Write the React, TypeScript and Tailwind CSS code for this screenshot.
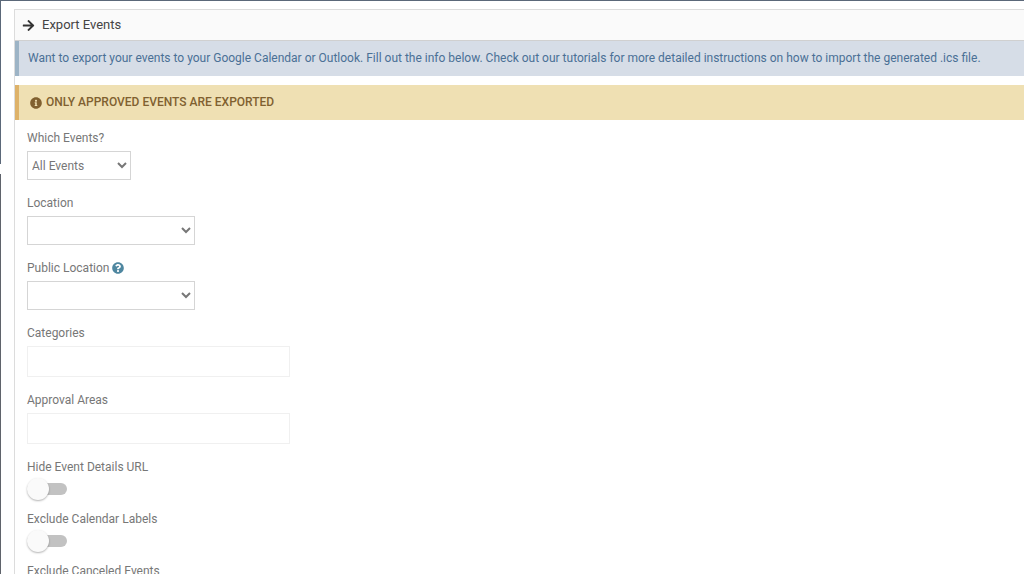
import { useId, type ReactNode } from "react";
import { FaArrowRight, FaInfoCircle, FaQuestionCircle } from "react-icons/fa";

interface FieldProps {
  id: string;
  label: string;
  help?: boolean;
  children: ReactNode;
}

function Field({ id, label, help, children }: FieldProps) {
  return (
    <div className="flex flex-col items-start gap-[3px] pb-[13px]">
      <div className="flex items-center gap-[3px] leading-5">
        <label htmlFor={id}>{label}</label>
        {help && (
          <button type="button" aria-label={`About ${label}`} className="text-[#4f87a0]">
            <FaQuestionCircle className="size-3" />
          </button>
        )}
      </div>
      {children}
    </div>
  );
}

interface SelectFieldProps {
  label: string;
  options: string[];
  help?: boolean;
}

function SelectField({ label, options, help }: SelectFieldProps) {
  const id = useId();
  const width = options[0] ? "w-[104px]" : "w-[168px]";

  return (
    <Field id={id} label={label} help={help}>
      <select id={id} className={`${width} h-[29px] border border-[#d5d5d5] bg-white`}>
        {options.map((option) => (
          <option key={option}>{option}</option>
        ))}
      </select>
    </Field>
  );
}

function TextField({ label }: { label: string }) {
  const id = useId();

  return (
    <Field id={id} label={label}>
      <input id={id} type="text" className="h-[31px] w-[263px] border border-[#f0f0f0] bg-white px-2" />
    </Field>
  );
}

function Toggle({ label }: { label: string }) {
  const id = useId();

  return (
    <div className="flex flex-col items-start gap-px pb-[9px]">
      <label htmlFor={id} className="leading-5">
        {label}
      </label>
      <label className="flex h-[22px] w-10 cursor-pointer items-center">
        <input id={id} type="checkbox" className="peer sr-only" />
        {/* Track */}
        <span className="flex h-3 w-full items-center rounded-full bg-[#c2c2c2] peer-checked:justify-end peer-checked:bg-[#8fb0c3]">
          {/* Knob */}
          <span className="size-[22px] shrink-0 rounded-full bg-[#fafafa] shadow-[0_1px_2px_rgba(0,0,0,0.3)]" />
        </span>
      </label>
    </div>
  );
}

export default function App() {
  return (
    <div className="flex h-screen overflow-hidden border-t border-[#5b6879] bg-white font-[Roboto,sans-serif] text-xs text-[#777]">
      {/* Page edge */}
      <div className="flex w-px shrink-0 flex-col gap-2.5">
        <div className="h-[163px] bg-[#5b6879]" />
        <div className="grow bg-[#5f636b]" />
      </div>

      <main className="min-w-0 grow pt-2 pl-[13px]">
        <section className="min-h-full border-t border-l border-[#dcdcdc]">
          <header className="flex h-[31px] items-center gap-[7px] border-b border-[#d0d0d0] bg-[#fafafa] pl-[7px] text-[#444]">
            <FaArrowRight className="size-[13px] text-[#333]" />
            <h1 className="text-[13px]">Export Events</h1>
          </header>

          <p className="border-l-4 border-[#9db4c6] bg-[#d6dde7] py-2 pl-[9px] leading-[19px] text-[#4a7096]">
            Want to export your events to your Google Calendar or Outlook. Fill out the info below. Check out our
            tutorials for more detailed instructions on how to import the generated .ics file.
          </p>

          <p className="mt-[9px] flex items-center gap-1 border-l-4 border-[#deb269] bg-[#efe0b3] py-2 pl-[11px] leading-[19px] font-medium text-[#806030]">
            <FaInfoCircle className="size-3" />
            ONLY APPROVED EVENTS ARE EXPORTED
          </p>

          <form className="pt-2 pl-3">
            <SelectField label="Which Events?" options={["All Events", "My Events"]} />
            <SelectField label="Location" options={[""]} />
            <SelectField label="Public Location" options={[""]} help />
            <TextField label="Categories" />
            <TextField label="Approval Areas" />
            <Toggle label="Hide Event Details URL" />
            <Toggle label="Exclude Calendar Labels" />
            <Toggle label="Exclude Canceled Events" />
          </form>
        </section>
      </main>
    </div>
  );
}
